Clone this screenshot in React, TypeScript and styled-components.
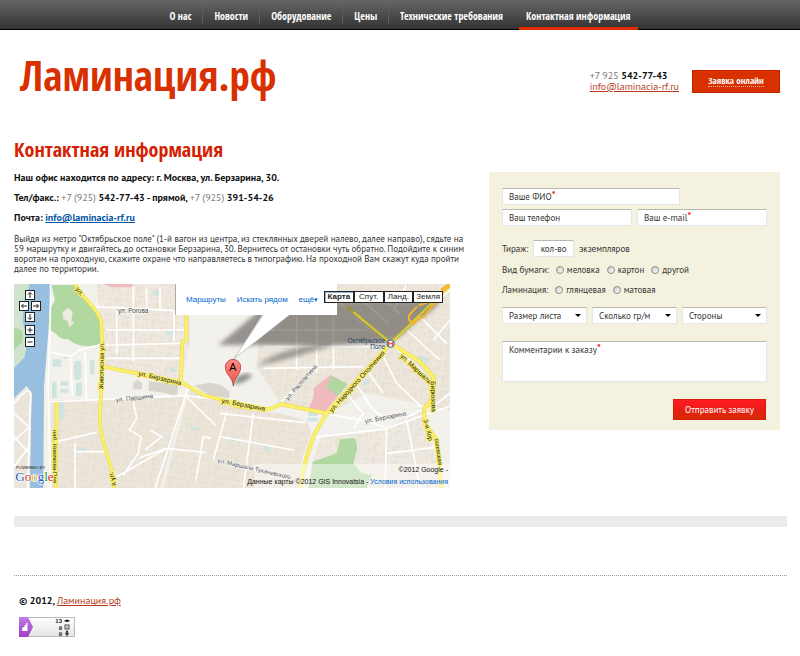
import React from "react";
import styled, { createGlobalStyle, css } from "styled-components";

const narrow = `"Open Sans Condensed", "Liberation Sans Narrow", "Open Sans", sans-serif`;
const body = `"PT Sans", "Noto Sans", sans-serif`;

const Global = createGlobalStyle`
  *, *::before, *::after { box-sizing: border-box; }
  body { margin: 0; background: #fff; color: #333; font-family: ${body}; font-size: 9px; line-height: 10px; }
  input, textarea, select, button { font: inherit; color: inherit; margin: 0; }
`;

const Nav = styled.nav`
  display: flex;
  justify-content: center;
  gap: 1px;
  height: 30px;
  background: linear-gradient(#666, #333);
  border-bottom: 1px solid #000;
`;

const NavItem = styled.a<{ $active?: boolean }>`
  display: flex;
  align-items: center;
  padding: 2px 11px 0;
  font: bold 10px ${narrow};
  color: #fff;
  text-decoration: none;
  white-space: nowrap;
  position: relative;
  & + &::before {
    content: "";
    position: absolute;
    left: -1px;
    top: 6px;
    height: 18px;
    border-left: 1px solid #5c5c5c;
  }
  ${(p) =>
    p.$active &&
    css`
      &::after {
        content: "";
        position: absolute;
        inset: auto 4px -1px 4px;
        height: 3px;
        background: #e02b00;
      }
    `}
`;

const Header = styled.header`
  display: flex;
  align-items: flex-start;
  padding: 20px 20px 0;
  height: 108px;
`;

const Logo = styled.a`
  margin-right: auto;
  font: bold 41px/50px ${narrow};
  color: #d93000;
  text-decoration: none;
`;

const Contacts = styled.address`
  display: flex;
  flex-direction: column;
  margin: 20px 13px 0 0;
  font-style: normal;
  font-size: 10px;
  line-height: 11px;
  color: #777;
  b { color: #111; }
`;

const RedLink = styled.a`
  color: #b63b1c;
`;

const OrderLink = styled.a`
  margin-top: 20px;
  width: 88px;
  height: 23px;
  display: grid;
  place-items: center;
  background: #d93000;
  border: 1px solid #c62300;
  color: #fff;
  font: bold 9px/10px ${narrow};
  text-decoration: none;
  span { border-bottom: 1px dotted #f0b8a8; }
`;

const Main = styled.main`
  display: grid;
  grid-template-columns: minmax(0, 1fr) 291px;
  gap: 19px;
  padding: 0 20px 0 14px;
`;

const Title = styled.h1`
  margin: 0 0 6px;
  font: bold 20px/24px ${narrow};
  color: #d42000;
`;

const Fact = styled.p`
  margin: 0;
  font-size: 10px;
  line-height: 20px;
  font-weight: bold;
  color: #111;
  span { font-weight: normal; color: #777; }
  a { color: #0055a5; }
`;

const Directions = styled.p`
  margin: 6px 0 10px;
`;

const MapBox = styled.section`
  position: relative;
  max-width: 436px;
  font-family: "Liberation Sans", sans-serif;
  > svg { display: block; width: 100%; height: auto; }
`;

const MapPopup = styled.div`
  position: absolute;
  top: 0;
  left: 161px;
  width: 162px;
  height: 31px;
  display: flex;
  align-items: center;
  justify-content: space-between;
  padding: 1px 19px 0 10px;
  background: #fff;
  border-left: 1px solid #aaa;
  font-size: 8px;
  a { color: #0066cc; text-decoration: none; white-space: nowrap; }
`;

const MapTypes = styled.div`
  position: absolute;
  top: 7px;
  right: 7px;
  display: flex;
  width: 119px;
`;

const MapType = styled.button<{ $on?: boolean }>`
  flex: 1;
  height: 12px;
  padding: 0;
  border: 1px solid #222;
  background: #fff;
  color: #222;
  font-size: 8px;
  line-height: 8px;
  font-weight: ${(p) => (p.$on ? "bold" : "normal")};
  box-shadow: ${(p) => (p.$on ? "inset 1px 1px #8fb4d8" : "none")};
`;

const Pad = styled.div`
  position: absolute;
  top: 6px;
  left: 4px;
  display: grid;
  grid-template-columns: repeat(4, 6px);
  grid-template-rows: 11px 11px 13px 12px 10px;
`;

const PadButton = styled.button<{ $col: number; $row: number }>`
  grid-column: ${(p) => p.$col} / span 2;
  grid-row: ${(p) => p.$row};
  justify-self: center;
  width: 10px;
  height: 10px;
  padding: 0;
  border: 1px solid #222;
  background: #fff;
  svg { display: block; width: 8px; height: 8px; }
`;

const Attribution = styled.div`
  position: absolute;
  right: 2px;
  bottom: 0;
  text-align: right;
  font-size: 7px;
  line-height: 12px;
  color: #111;
  a { color: #0066cc; text-decoration: none; }
`;

const Panel = styled.form`
  margin-top: 34px;
  align-self: start;
  padding: 16px 13px 10px;
  background: #f4f1de;
`;

const Row = styled.div<{ $top?: number; $gap?: number }>`
  display: flex;
  align-items: center;
  gap: ${(p) => p.$gap ?? 5}px;
  margin-top: ${(p) => p.$top ?? 0}px;
  height: 17px;
`;

const Field = styled.div<{ $w?: number }>`
  position: relative;
  flex: ${(p) => (p.$w ? `0 0 ${p.$w}px` : "1 1 0")};
  min-width: 0;
  height: 17px;
  label {
    position: absolute;
    left: 7px;
    top: 4px;
    pointer-events: none;
  }
  sup { color: #f00000; font-size: 10px; font-weight: bold; line-height: 0; vertical-align: 2px; }
`;

const boxed = css`
  display: block;
  width: 100%;
  height: 17px;
  border: 1px solid #e2e6ea;
  border-top: 1px solid #b9b9b4;
  border-radius: 1px;
  background: #fff;
`;

const Input = styled.input`
  ${boxed}
  padding: 0 7px;
`;

const CountInput = styled(Input)`
  padding: 0;
  text-align: center;
`;

const Area = styled.textarea`
  ${boxed}
  height: 41px;
  resize: none;
`;

const AreaField = styled(Field)`
  margin-top: 17px;
  height: 41px;
`;

const SelectWrap = styled.div`
  position: relative;
  flex: 1 1 0;
  &::after {
    content: "";
    position: absolute;
    right: 6px;
    top: 7px;
    border: 3px solid transparent;
    border-top: 3px solid #000;
    border-bottom: 0;
    pointer-events: none;
  }
`;

const Select = styled.select`
  ${boxed}
  appearance: none;
  padding: 0 6px;
`;

const Choice = styled.label`
  display: flex;
  align-items: center;
  gap: 3px;
  input {
    appearance: none;
    width: 8px;
    height: 8px;
    border: 1px solid #8b8b86;
    border-radius: 50%;
    background: linear-gradient(135deg, #c9c9c4, #fff);
  }
  input:checked { background: #555; }
`;

const Submit = styled.button`
  display: block;
  margin: 17px 1px 0 auto;
  width: 93px;
  height: 21px;
  padding: 0;
  border: 1px solid #d81b10;
  background: linear-gradient(#ff1c24, #ee1c18 45%, #d22c00);
  color: #fff;
`;

const Band = styled.div`
  margin: 28px 13px 0 14px;
  height: 11px;
  background: repeating-conic-gradient(#e3e3e3 0 25%, #f3f3f3 0 50%) 0 0 / 2px 2px;
`;

const Footer = styled.footer`
  margin: 48px 13px 0 14px;
  padding: 20px 5px 18px;
  border-top: 1px dotted #999;
  p { margin: 0 0 11px; font-size: 10px; font-weight: bold; color: #111; }
  p a { font-weight: normal; }
  svg { display: block; }
`;

const arrows: [string, number, number, string][] = [
  ["Вверх", 2, 1, "M4 7V1.5M2 3.5L4 1.5L6 3.5"],
  ["Влево", 1, 2, "M7 4H1.5M3.5 2L1.5 4L3.5 6"],
  ["Вправо", 3, 2, "M1 4H6.5M4.5 2L6.5 4L4.5 6"],
  ["Вниз", 2, 3, "M4 1V6.5M2 4.5L4 6.5L6 4.5"],
  ["Крупнее", 2, 4, "M1.5 4H6.5M4 1.5V6.5"],
  ["Мельче", 2, 5, "M1.5 4H6.5"],
];

const westRoads =
  "M225 12C250 60 300 90 304 130L308 260 300 400C296 470 325 520 342 600V625M308 260L545 307 610 345 700 368M559 100v80l-13 8-3 115M170 366l-2 259";
const eastRoads =
  "M0 362L60 380 140 388Q165 385 180 372L320 400 512 190 690 15M320 400L285 460Q255 530 240 625M512 190L380 80M512 190L600 245 640 290Q650 360 612 385L615 430 650 480 665 625";

function StreetMap() {
  return (
    <svg viewBox="0 0 1308 612" fontFamily="Liberation Sans, sans-serif" aria-label="Карта района">
      <defs>
        <pattern id="blocks" width="58" height="46" patternUnits="userSpaceOnUse" patternTransform="rotate(8)">
          <path d="M4 4h22v8h-14v16h-8zM34 8h18v6h-18zM34 24h6v16h-6zM46 22h7v18h-7zM8 34h18v6h-18z" fill="#e5dccf" />
        </pattern>
        <filter id="soft"><feGaussianBlur stdDeviation="6" /></filter>
        <linearGradient id="pin" x2="0" y2="1"><stop stopColor="#ff8b84" /><stop offset="1" stopColor="#ee554d" /></linearGradient>
      </defs>
      <rect width="1308" height="612" fill="#f3f1ec" />
      <g transform="translate(-42 -12)">
        <path d="M290 12h240v90h40v80l-25 120-230-40z" fill="#eee8de" />
        <path d="M155 365l400-15-75 275H150z" fill="#ece5d9" />
        <path d="M570 320l140 60 240 40-80 210H490z" fill="#ece5d9" />
        <path d="M290 12h240v90h40v80l-25 120-230-40zM155 365l400-15-75 275H150zM570 320l140 60 240 40-80 210H490z" fill="url(#blocks)" opacity=".6" />
        <path d="M42 12H155L145 155 132 320 130 625H88L95 340 80 318 42 355z" fill="#98bfdf" />
        <path d="M42 12h48l-18 50-4 60 14 60-8 50-32 32z" fill="#cfe3cd" />
        <path d="M42 145c30-4 32 30 22 45l-22 20z" fill="#aed7a0" />
        <path d="M42 360c20-30 55-50 52-10L90 625H42z" fill="#ebe5da" />
        <path d="M42 372c20-30 48-52 50-30l-4 120-5 163M42 400l46 42-46 40M42 470l46 50M42 560l45-60" fill="none" stroke="#fff" strokeWidth="5" />
        <path d="M155 15H222L282 85 302 115 303 190C270 205 230 200 205 178 170 180 175 155 145 150L150 85 165 62z" fill="#b1d8a1" />
        <path d="M188 95l18-12 12 14-4 25 8 8-14 12-6-20-12-4z" fill="#efeae0" />
        <path d="M310 12h90l-6 10h-60z" fill="#f0b9bd" />
        <g fill="#cfe3df">
          <path d="M158 238h26v22h-26zM192 228h20v8h-20zM156 305h14v50h-14zM182 304h22v14h-22zM180 328h26v10h-26zM178 360h14v60h-14zM228 308h18v40h-18zM270 240h14v42h-14zM498 152h32v14h-32zM512 260h14v16h-14zM570 438l28 6v10l-28-6zM232 502h26v14h-26zM458 32h22v14h-22z" />
          <rect x="222" y="242" width="22" height="58" rx="11" />
        </g>
        <path d="M400 310l12-12 14 12v18h-26zM446 304l90 8-6 40-30-12-54-8zM582 316l50-8 30 6 26 20v20l-60-8z" fill="#d8d5cf" />
        <path d="M152 12l-2 140-6 170 8 303M152 366L555 347 690 362M145 215l65 15 30-20 60-15M210 225l8 120M255 215l5 150M302 80h-15l235 12v90M318 150h240M350 92v130M400 20v225M318 195l230-5M440 20v70M480 20v70M318 235h228M565 320L500 520 465 625M400 365l10 50-22 35 35 20-8 50-45 65M170 485l120-28M225 490v135M225 515h90M350 590L500 505 690 525M500 505l-85 30M610 470l90 20M610 470l-25 150M555 347l135 130M450 450l35 20-50 40" fill="none" stroke="#fff" strokeWidth="5" />
        <path d={westRoads} fill="none" stroke="#e9d84a" strokeWidth="11" />
        <path d={westRoads} fill="none" stroke="#fbf06a" strokeWidth="8" />
      </g>
      <g transform="translate(618 -12)">
        <path d="M130 12H690V390L440 340 330 400 180 365 110 260z" fill="#ece6db" />
        <path d="M320 400L610 385 665 625H260z" fill="#eee9e0" />
        <path d="M0 400L260 425 235 625H-80z" fill="#ece5d9" />
        <path d="M130 12H690V390L440 340 330 400 180 365 110 260zM320 400L610 385 665 625H260zM0 400L260 425 235 625H-80z" fill="url(#blocks)" opacity=".6" />
        <path d="M135 375l185 27 290-16-120 62-210 25-20-48-80-30z" fill="#f2f1ed" />
        <path d="M280 325l52-40 50 28-72 88-44-14 16-38z" fill="#f0b9bd" />
        <path d="M335 288l48 24-28 36-36-26z" fill="#b1d8a1" />
        <path d="M278 545L350 520 360 478 405 474 412 505 400 550 425 580 455 585 440 625H265z" fill="#b1d8a1" />
        <path d="M265 396h28v12h-28zM262 414h30v10h-30zM30 470h25v14h-25zM130 495l20 4v18l-20-4zM430 300h18v14h-18zM600 225l28 14-10 12-26-14z" fill="#cfe3df" />
        <path d="M512 190L440 140 350 60 300 12M140 100h210M150 150h290M130 200h370M230 20v250M290 20v260M340 60v210M130 265l300-5M415 50l90 80M460 30l80 70M560 150l100 90M600 110l80 80M560 15l-40 80M512 190l100 90M485 220l45 90 80 75M440 270l50 70M400 300l60 90 30 20M370 330l60 70-30 45M285 472L490 448 690 378M180 370L280 270M0 400l255 28M0 470l220 40M100 400L70 625M20 395L-20 540M320 402L450 425 500 445 495 625M560 420l40 205M500 520l160-20M615 385l-60 30M640 180l50-60M620 90l70-60M690 340l-45 35" fill="none" stroke="#fff" strokeWidth="5" />
        <path d={eastRoads} fill="none" stroke="#e9d84a" strokeWidth="12" />
        <path d={eastRoads} fill="none" stroke="#fbf06a" strokeWidth="9" />
        <path d="M690 15L665 32" stroke="#f7b733" strokeWidth="14" />
        <path d="M-5 195L120 90 350 62H662Q625 105 580 128 530 190 480 188 340 198 200 195z" fill="#3a3835" opacity=".5" filter="url(#soft)" />
        <path d="M350 190Q190 195 110 258 250 230 350 190z" fill="#333" opacity=".4" filter="url(#soft)" />
        <path d="M640 65L518 184M400 96L504 182" fill="none" stroke="#d9cf45" strokeWidth="7" opacity=".8" />
        <path d="M645 68l-36 44-12 2-16 18-14-12v-14l24-26M596 76l34-12" fill="none" stroke="#f5b52a" strokeWidth="6" />
        <path d="M40 315Q50 275 95 282 95 300 40 315z" fill="#333" opacity=".55" filter="url(#soft)" />
        <path d="M130 100L42 236 215 100z" fill="#fff" />
        <path d="M130 104L42 236 210 104" fill="none" stroke="#aaa" strokeWidth="2" />
        <path d="M40 318C38 290 16 285 16 261a23 23 0 0 1 46 0C62 285 42 290 40 318z" fill="url(#pin)" stroke="#9c2f2a" strokeWidth="2" />
        <text x="28" y="272" fontSize="32">A</text>
        <circle cx="512" cy="191" r="11" fill="#fff" stroke="#33527d" strokeWidth="3" />
        <path d="M506 197v-11l6 7 6-7v11" fill="none" stroke="#d22" strokeWidth="3" />
      </g>
      <path d="M720 540H1308V612H720z" fill="#fff" opacity=".45" />
      <g fontSize="19" fill="#444" stroke="#fff" strokeWidth="3" paintOrder="stroke">
        <text x="312" y="86">ул. Рогова</text>
        <text transform="translate(306 355) rotate(-7)">ул. Паршина</text>
        <text transform="translate(822 350) rotate(-49)">ул. Расплетина</text>
        <text transform="translate(1054 418) rotate(-11)">ул. Берзарина</text>
        <text transform="translate(610 535) rotate(13)" fontSize="18">ул. Маршала Тухачевского</text>
      </g>
      <g fill="#1d3f63" fontSize="19" textAnchor="end"><text x="1114" y="176">Октябрьское</text><text x="1114" y="195">Поле</text></g>
      <g fontSize="20" fill="#222" stroke="#fbf06a" strokeWidth="6" paintOrder="stroke">
        <text transform="translate(372 274) rotate(13)">ул. Берзарина</text>
        <text transform="translate(622 356) rotate(11)">ул. Берзарина</text>
        <text transform="translate(268 316) rotate(-89)" fontSize="19">Живописная ул.</text>
        <text transform="translate(184 16) rotate(52)">ул.</text>
        <text transform="translate(118 438) rotate(90)" fontSize="18">наб. Новикова-При</text>
        <text transform="translate(307 604) rotate(-105)">я ул.</text>
        <text transform="translate(954 386) rotate(-48)">ул. Народного Ополчения</text>
        <text transform="translate(1157 218) rotate(43)">ул. Маршала</text>
        <text transform="translate(1250 292) rotate(88)">Бирюзова</text>
        <text transform="translate(1228 408) rotate(75)" fontSize="19">3-я Хор</text>
        <text transform="translate(1262 464) rotate(82)" fontSize="18">ошевская</text>
      </g>
      <text x="6" y="555" fontSize="13" fill="#222">POWERED BY</text>
      <text x="4" y="592" fontSize="39" fontFamily="Liberation Serif, serif" stroke="#fff" strokeWidth="4" paintOrder="stroke">
        <tspan fill="#1b57c7">G</tspan><tspan fill="#d8271c">o</tspan><tspan fill="#efb010">o</tspan><tspan fill="#1b57c7">g</tspan><tspan fill="#179a3b">l</tspan><tspan fill="#d8271c">e</tspan>
      </text>
    </svg>
  );
}

function CounterBadge() {
  return (
    <svg width="56" height="21" viewBox="0 0 56 21" aria-label="Счётчик посещений">
      <defs>
        <linearGradient id="violet" x2="0" y2="1"><stop stopColor="#c07be8" /><stop offset="1" stopColor="#a23fc4" /></linearGradient>
        <linearGradient id="silver" x2="0" y2="1"><stop stopColor="#fff" /><stop offset="1" stopColor="#e4e4e4" /></linearGradient>
      </defs>
      <rect x=".5" y=".5" width="55" height="19" fill="url(#silver)" stroke="#bbb" />
      <path d="M0 0H9L14 10L9 20H0z" fill="url(#violet)" />
      <path d="M3 14v-3h1v3zM4 14v-4h1.5v4zM5.500 14V8H7v6zM7 14V6h1.500v8z" fill="#fff" />
      <g fontFamily="Liberation Sans, sans-serif" fontSize="6" fontWeight="bold" textAnchor="end" fill="#222">
        <text x="43" y="6">13</text><text x="43" y="13">9</text><text x="43" y="19">9</text>
      </g>
      <path d="M45 4q3-3 6 0q-3 2-6 0z" fill="#222" />
      <rect x="46" y="8" width="4" height="4" fill="none" stroke="#222" strokeWidth=".8" />
      <path d="M47.5 10h1" stroke="#222" />
      <circle cx="48" cy="14.5" r="1" fill="#222" />
      <path d="M46.5 15.5h3v2h-1v2h-1v-2h-1z" fill="#222" />
    </svg>
  );
}

const nav = ["О нас", "Новости", "Оборудование", "Цены", "Технические требования", "Контактная информация"];

const Radios = ({ name, options }: { name: string; options: string[] }) => (
  <>
    {options.map((o) => (
      <Choice key={o}>
        <input type="radio" name={name} value={o} />
        {o}
      </Choice>
    ))}
  </>
);

export default function App() {
  return (
    <>
      <Global />
      <Nav>
        {nav.map((n, i) => (
          <NavItem key={n} href="#" $active={i === 5}>{n}</NavItem>
        ))}
      </Nav>
      <Header>
        <Logo href="#">Ламинация.рф</Logo>
        <Contacts>
          <span>+7 925 <b>542-77-43</b></span>
          <RedLink href="mailto:info@laminacia-rf.ru">info@laminacia-rf.ru</RedLink>
        </Contacts>
        <OrderLink href="#order"><span>Заявка онлайн</span></OrderLink>
      </Header>
      <Main>
        <div>
          <Title>Контактная информация</Title>
          <Fact>Наш офис находится по адресу: г. Москва, ул. Берзарина, 30.</Fact>
          <Fact>Тел/факс.: <span>+7 (925)</span> 542-77-43 - прямой, <span>+7 (925)</span> 391-54-26</Fact>
          <Fact>Почта: <a href="mailto:info@laminacia-rf.ru">info@laminacia-rf.ru</a></Fact>
          <Directions>
            Выйдя из метро "Октябрьское поле" (1-й вагон из центра, из стеклянных дверей налево, далее направо), сядьте на
            59 маршрутку и двигайтесь до остановки Берзарина, 30. Вернитесь от остановки чуть обратно. Подойдите к синим
            воротам на проходную, скажите охране что направляетесь в типографию. На проходной Вам скажут куда пройти
            далее по территории.
          </Directions>
          <MapBox>
            <StreetMap />
            <Pad>
              {arrows.map(([label, col, row, d]) => (
                <PadButton key={label} type="button" aria-label={label} $col={col} $row={row}>
                  <svg viewBox="0 0 8 8"><path d={d} fill="none" stroke="#222" /></svg>
                </PadButton>
              ))}
            </Pad>
            <MapPopup>
              <a href="#">Маршруты</a>
              <a href="#">Искать рядом</a>
              <a href="#">ещё<small>▾</small></a>
            </MapPopup>
            <MapTypes>
              {["Карта", "Спут.", "Ланд.", "Земля"].map((t, i) => (
                <MapType key={t} type="button" $on={i === 0}>{t}</MapType>
              ))}
            </MapTypes>
            <Attribution>
              ©2012 Google -<br />
              Данные карты ©2012 GIS Innovatsia - <a href="#">Условия использования</a>
            </Attribution>
          </MapBox>
        </div>
        <Panel id="order">
          <Row>
            <Field $w={178}><Input id="fio" /><label htmlFor="fio">Ваше ФИО<sup>*</sup></label></Field>
          </Row>
          <Row $top={4}>
            <Field><Input id="phone" type="tel" /><label htmlFor="phone">Ваш телефон</label></Field>
            <Field><Input id="email" type="email" /><label htmlFor="email">Ваш e-mail<sup>*</sup></label></Field>
          </Row>
          <Row $top={14}>
            <label htmlFor="count">Тираж:</label>
            <Field $w={41}><CountInput id="count" defaultValue="кол-во" /></Field>
            экземпляров
          </Row>
          <Row $top={4} $gap={7}>Вид бумаги: <Radios name="paper" options={["меловка", "картон", "другой"]} /></Row>
          <Row $top={3} $gap={7}>Ламинация: <Radios name="film" options={["глянцевая", "матовая"]} /></Row>
          <Row $top={9}>
            {["Размер листа", "Сколько гр/м", "Стороны"].map((s) => (
              <SelectWrap key={s}><Select aria-label={s}><option>{s}</option></Select></SelectWrap>
            ))}
          </Row>
          <AreaField><Area id="note" /><label htmlFor="note">Комментарии к заказу<sup>*</sup></label></AreaField>
          <Submit type="button">Отправить заявку</Submit>
        </Panel>
      </Main>
      <Band />
      <Footer>
        <p>© 2012, <RedLink href="#">Ламинация.рф</RedLink></p>
        <CounterBadge />
      </Footer>
    </>
  );
}
